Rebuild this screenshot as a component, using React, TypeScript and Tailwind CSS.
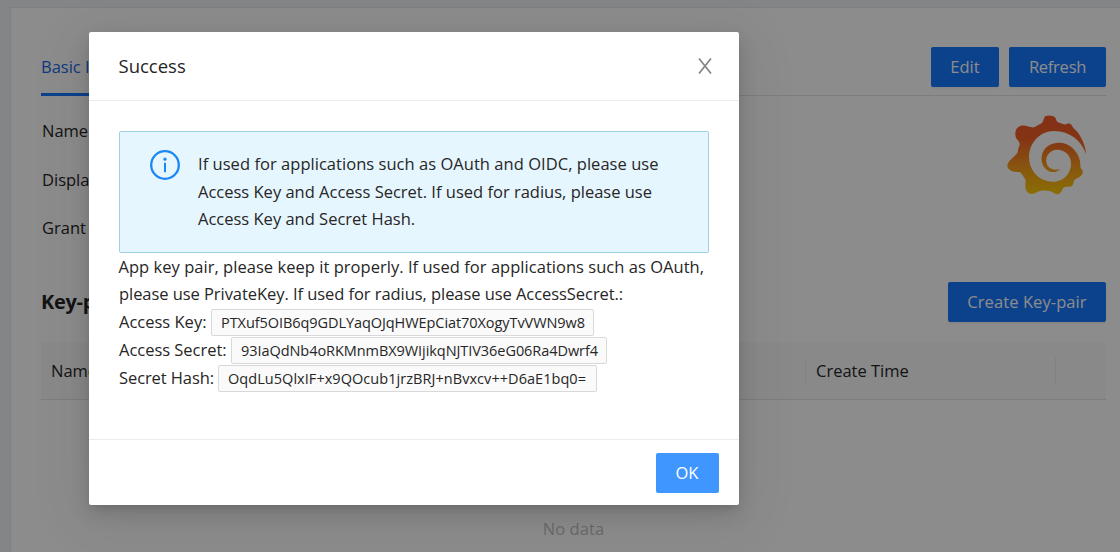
import type { ReactNode } from "react";

function PrimaryButton({ children, className }: { children: ReactNode; className: string }) {
  return (
    <button
      className={`flex h-10 items-center justify-center rounded-[2px] bg-[#1677ff] text-white shadow-[0_2px_0_rgba(0,0,0,0.04)] ${className}`}
    >
      {children}
    </button>
  );
}

function AppLogo() {
  return (
    <svg className="h-20 w-20" viewBox="80 45 240 240" aria-hidden="true">
      <defs>
        <linearGradient id="logo" x1="0" y1="0" x2="0" y2="1">
          <stop offset="0.05" stopColor="#f05a28" />
          <stop offset="0.3" stopColor="#f05f26" />
          <stop offset="0.65" stopColor="#f79a1c" />
          <stop offset="1" stopColor="#fbca0a" />
        </linearGradient>
      </defs>
      <path
        fill="url(#logo)"
        d="M317 162C317 140 302 102 279 84C275 75 269 68 261 71Q254 75 248 72L231 66C227 61 227 50 217 48Q205 45 195 49C190 52 190 64 184 70Q172 76 162 82C148 84 136 73 120 78C106 83 103 98 106 110C109 121 119 124 118 134Q113 145 112 157C106 170 82 181 81 197C82 213 102 216 117 216C126 219 128 230 135 238C138 248 132 260 137 269Q143 282 155 282C166 281 173 272 183 272C193 271 207 273 215 275C222 279 226 285 235 282C245 278 244 267 252 262C262 257 272 264 277 255C281 248 278 242 287 236C297 234 309 224 307 213C304 206 300 206 300 199C302 173 285 143 257 132C229 122 197 133 187 158C177 183 189 211 214 216Q230 218 240 207Q226 212 214 207C199 200 194 184 200 169C208 151 229 144 248 153C270 163 277 188 269 209C260 236 232 250 203 244C169 237 146 206 146 171C147 127 180 92 223 93C267 94 302 119 317 162Z"
      />
    </svg>
  );
}

function InfoIcon() {
  return (
    <svg className="h-[30px] w-[30px] shrink-0" viewBox="0 0 30 30" fill="none" aria-hidden="true">
      <circle cx="15" cy="15" r="13.8" stroke="#1b86f5" strokeWidth="2.3" />
      <circle cx="15" cy="9.2" r="1.6" fill="#1b86f5" />
      <path d="M15 12.8v9.4" stroke="#1b86f5" strokeWidth="2" />
    </svg>
  );
}

function KeyRow({ label, value, labelClass, valueClass }: { label: string; value: string; labelClass: string; valueClass: string }) {
  return (
    <div className="flex h-7 items-center whitespace-nowrap">
      <span className={`shrink-0 ${labelClass}`}>{label}</span>
      <span
        className={`flex h-[27px] shrink-0 items-center rounded-[2px] border border-[#d9d9d9] bg-[#fafafa] pt-[2px] pl-[9px] text-[14.5px] ${valueClass}`}
      >
        {value}
      </span>
    </div>
  );
}

function Page() {
  return (
    <div className="h-full bg-[#f0f2f5] pt-[7px] pl-[10px]">
      <div className="h-full border-t border-l border-[#e6e8ec] bg-white pr-[14px] pl-[30px]">
        <div className="flex h-[88px] items-end justify-between border-b border-[#e4e4e4]">
          <div className="-mb-px flex h-[57px] w-[66px] items-start overflow-hidden border-b-[3px] border-[#1677ff] pt-[16px] whitespace-nowrap text-[#1c69e3]">
            Basic Info
          </div>
          <div className="flex gap-[10px] pb-2">
            <PrimaryButton className="w-[68px]">Edit</PrimaryButton>
            <PrimaryButton className="w-[97px] tracking-[-0.25px]">Refresh</PrimaryButton>
          </div>
        </div>
        <div className="flex h-[186px] justify-between pt-[19px]">
          <div className="w-[70px] overflow-hidden pl-[1px] whitespace-nowrap">
            <div className="h-[49px] leading-[32px]">Name</div>
            <div className="h-12 leading-[32px]">Display</div>
            <div className="leading-[32px]">Grant</div>
          </div>
          <div className="pr-[19px]">
            <AppLogo />
          </div>
        </div>
        <div className="flex h-10 items-center justify-between">
          <h2 className="text-[20px] font-bold tracking-[-0.3px]">Key-pair</h2>
          <PrimaryButton className="w-[158px] tracking-[0.08px]">Create Key-pair</PrimaryButton>
        </div>
        <div className="mt-5 flex h-[58px] items-center border-b border-[#e3e3e3] bg-[#fafafa]">
          <div className="flex h-[28px] w-[765px] items-center border-r border-[#ededed] pt-[2px] pl-[10px]">Name</div>
          <div className="flex h-[28px] w-[250px] items-center border-r border-[#ededed] pt-[2px] pl-[10px]">Create Time</div>
        </div>
        <div className="pt-[117px] text-center tracking-[0.1px] text-[#bfbfbf]">No data</div>
      </div>
    </div>
  );
}

function SuccessModal() {
  return (
    <div
      role="dialog"
      className="absolute top-8 left-[89px] flex h-[473px] w-[650px] flex-col rounded-[2px] bg-white whitespace-nowrap shadow-[0_8px_20px_rgba(0,0,0,0.14),0_4px_8px_-4px_rgba(0,0,0,0.14),0_12px_60px_10px_rgba(0,0,0,0.06)]"
    >
      <header className="flex h-[69px] items-center justify-between border-b border-[#ececec] pr-[27px] pl-[29.5px]">
        <h1 className="text-[18.5px]">Success</h1>
        <svg className="h-4 w-[14px]" viewBox="0 0 14 16" fill="none" stroke="#858585" strokeWidth="1.7" aria-label="Close">
          <path d="M1 .5L13 15.5M13 .5L1 15.5" />
        </svg>
      </header>
      <div className="flex-1 px-[30px] pt-[30px]">
        <div className="flex h-[122px] gap-[18px] rounded-[2px] border border-[#9ed0e2] bg-[#e6f6fe] pt-[18px] pl-[30px]">
          <InfoIcon />
          <div className="text-[16.5px] leading-[27.5px]">
            <p className="tracking-[0.038px]">If used for applications such as OAuth and OIDC, please use</p>
            <p>Access Key and Access Secret. If used for radius, please use</p>
            <p>Access Key and Secret Hash.</p>
          </div>
        </div>
        <p className="-ml-[0.5px] h-[27px] leading-[27.5px] tracking-[0.034px]">
          App key pair, please keep it properly. If used for applications such as OAuth,
        </p>
        <p className="h-7 leading-[27.5px] tracking-[-0.06px]">
          please use PrivateKey. If used for radius, please use AccessSecret.:
        </p>
        <KeyRow
          label="Access Key:"
          value="PTXuf5OIB6q9GDLYaqOJqHWEpCiat70XogyTvVWN9w8"
          labelClass="w-[92px]"
          valueClass="w-[383px] tracking-[-0.067px]"
        />
        <KeyRow
          label="Access Secret:"
          value="93IaQdNb4oRKMnmBX9WIjikqNJTIV36eG06Ra4Dwrf4"
          labelClass="w-[112px] tracking-[-0.03px]"
          valueClass="w-[376px] tracking-[-0.06px]"
        />
        <KeyRow
          label="Secret Hash:"
          value="OqdLu5QlxIF+x9QOcub1jrzBRJ+nBvxcv++D6aE1bq0="
          labelClass="w-[99px] tracking-[-0.09px]"
          valueClass="w-[379px] tracking-[0.05px]"
        />
      </div>
      <footer className="flex h-[66px] items-center justify-end border-t border-[#ececec] pr-5">
        <button className="h-10 w-[63px] rounded-[2px] bg-[#4096ff] pt-[2px] pr-px text-white">OK</button>
      </footer>
    </div>
  );
}

export default function App() {
  return (
    <div className="relative h-[552px] w-[1120px] overflow-hidden font-['Open_Sans','Noto_Sans',sans-serif] text-[16.5px] text-[#262626]">
      <Page />
      <div className="absolute inset-0 bg-black/45" />
      <SuccessModal />
    </div>
  );
}
